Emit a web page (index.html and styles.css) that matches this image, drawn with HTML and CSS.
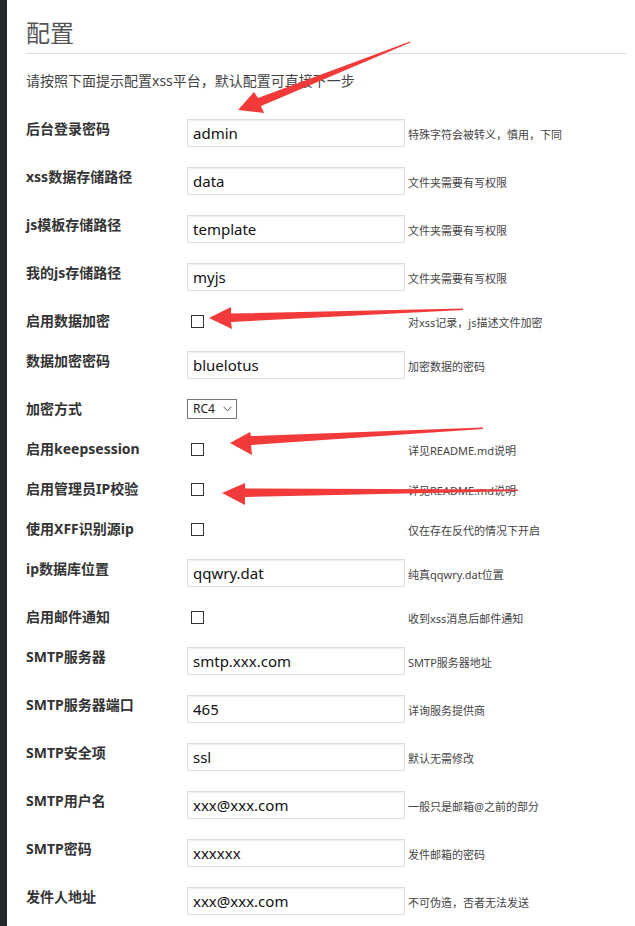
FILE: index.html
```html
<!DOCTYPE html>
<html lang="zh-CN">
<head>
<meta charset="utf-8">
<title>配置</title>
<link rel="stylesheet" href="styles.css">
</head>
<body>
<div class="page">
  <aside class="sidebar"></aside>
  <main class="content">
    <h1 class="title">配置</h1>
    <p class="intro">请按照下面提示配置xss平台，默认配置可直接下一步</p>
    <table class="form-table">
      <colgroup><col class="c-label"><col class="c-field"><col class="c-desc"></colgroup>
      <tr><th>后台登录密码</th><td class="field"><input class="text" type="text" value="admin"></td><td class="desc">特殊字符会被转义，慎用，下同</td></tr>
      <tr><th>xss数据存储路径</th><td class="field"><input class="text" type="text" value="data"></td><td class="desc">文件夹需要有写权限</td></tr>
      <tr><th>js模板存储路径</th><td class="field"><input class="text" type="text" value="template"></td><td class="desc">文件夹需要有写权限</td></tr>
      <tr><th>我的js存储路径</th><td class="field"><input class="text" type="text" value="myjs"></td><td class="desc">文件夹需要有写权限</td></tr>
      <tr><th>启用数据加密</th><td class="field"><input class="check" type="checkbox"></td><td class="desc">对xss记录，js描述文件加密</td></tr>
      <tr><th>数据加密密码</th><td class="field"><input class="text" type="text" value="bluelotus"></td><td class="desc">加密数据的密码</td></tr>
      <tr><th>加密方式</th><td class="field"><span class="select-wrap"><select class="select"><option>RC4</option><option>AES</option></select><svg class="chevron" width="9" height="6" viewBox="0 0 9 6"><path d="M0.5 0.8 L4.5 4.8 L8.5 0.8" fill="none" stroke="#555" stroke-width="1"/></svg></span></td><td class="desc"></td></tr>
      <tr><th>启用keepsession</th><td class="field"><input class="check" type="checkbox"></td><td class="desc">详见README.md说明</td></tr>
      <tr><th>启用管理员IP校验</th><td class="field"><input class="check" type="checkbox"></td><td class="desc">详见README.md说明</td></tr>
      <tr><th>使用XFF识别源ip</th><td class="field"><input class="check" type="checkbox"></td><td class="desc">仅在存在反代的情况下开启</td></tr>
      <tr><th>ip数据库位置</th><td class="field"><input class="text" type="text" value="qqwry.dat"></td><td class="desc">纯真qqwry.dat位置</td></tr>
      <tr><th>启用邮件通知</th><td class="field"><input class="check" type="checkbox"></td><td class="desc">收到xss消息后邮件通知</td></tr>
      <tr><th>SMTP服务器</th><td class="field"><input class="text" type="text" value="smtp.xxx.com"></td><td class="desc">SMTP服务器地址</td></tr>
      <tr><th>SMTP服务器端口</th><td class="field"><input class="text" type="text" value="465"></td><td class="desc">详询服务提供商</td></tr>
      <tr><th>SMTP安全项</th><td class="field"><input class="text" type="text" value="ssl"></td><td class="desc">默认无需修改</td></tr>
      <tr><th>SMTP用户名</th><td class="field"><input class="text" type="text" value="xxx@xxx.com"></td><td class="desc">一般只是邮箱@之前的部分</td></tr>
      <tr><th>SMTP密码</th><td class="field"><input class="text" type="text" value="xxxxxx"></td><td class="desc">发件邮箱的密码</td></tr>
      <tr><th>发件人地址</th><td class="field"><input class="text" type="text" value="xxx@xxx.com"></td><td class="desc">不可伪造，否者无法发送</td></tr>
    </table>
  </main>
</div>
<svg class="annotations" width="635" height="926" viewBox="0 0 635 926" aria-hidden="true">
  <polygon class="arrow" points="238,110 254,92 258,98 410,41.5 410.5,42.5 261,106 264,113"/>
  <polygon class="arrow" points="209,318 231,307 231,313.5 463,308.5 463,310 231,322 232,329"/>
  <polygon class="arrow" points="230,443 250,432 251,436 483,427.5 483,429 251,445 252,455"/>
  <polygon class="arrow" points="222,493 245,483 245,488.5 518,489.5 518,491 245,497 245,505"/>
</svg>
</body>
</html>
```

FILE: styles.css
```css
html, body {
  margin: 0;
  padding: 0;
}

body {
  position: relative;
  overflow: hidden;
  background: #fff;
  color: #333;
  font-family: "Noto Sans", "Noto Sans CJK SC", sans-serif;
}

.page {
  display: flex;
  min-height: 926px;
}

.sidebar {
  flex: none;
  width: 7px;
  background: #23282d;
}

.content {
  flex: 1;
  padding: 0 8px 0 19px;
}

.title {
  margin: 17px 0 0;
  padding-bottom: 6px;
  font-size: 24px;
  line-height: 30px;
  font-weight: 400;
  color: #555;
  border-bottom: 1px solid #ddd;
  font-family: "Noto Sans CJK SC", sans-serif;
}

.intro {
  margin: 17px 0 0;
  font-size: 14px;
  line-height: 20px;
  color: #444;
}

.form-table {
  margin-top: 18px;
  width: 100%;
  table-layout: fixed;
  border-collapse: collapse;
  border-spacing: 0;
}

.c-label { width: 161px; }
.c-field { width: 221px; }

.form-table th {
  padding: 10px 0;
  text-align: left;
  vertical-align: top;
  font-size: 14px;
  line-height: 20px;
  font-weight: 700;
  color: #333;
  white-space: nowrap;
}

.form-table td {
  padding: 0;
}

.form-table .field {
  padding: 10px 0;
  vertical-align: middle;
}

.form-table .desc {
  padding-top: 4px;
  vertical-align: middle;
  font-size: 11px;
  line-height: 16px;
  color: #444;
  white-space: nowrap;
}

.text {
  display: block;
  box-sizing: border-box;
  width: 218px;
  height: 28px;
  margin: 0;
  padding: 0 5px;
  border: 1px solid #ddd;
  border-radius: 0;
  box-shadow: inset 0 1px 2px rgba(0, 0, 0, 0.07);
  background: #fff;
  color: #111;
  font-family: "Noto Sans", sans-serif;
  font-size: 15px;
  outline: none;
}

.check {
  display: block;
  -webkit-appearance: none;
  appearance: none;
  box-sizing: border-box;
  width: 13px;
  height: 13px;
  margin: 3px 3px 3px 4px;
  border: 1px solid #333;
  border-radius: 0;
  background: #fff;
}

.select-wrap {
  position: relative;
  display: block;
  width: 50px;
  height: 20px;
}

.select {
  display: block;
  -webkit-appearance: none;
  appearance: none;
  box-sizing: border-box;
  width: 50px;
  height: 20px;
  margin: 0;
  padding: 0 0 0 5px;
  border: 1px solid #777;
  border-radius: 0;
  background: #fff;
  font-family: "Noto Sans", sans-serif;
  font-size: 12px;
  line-height: 18px;
  color: #222;
}

.chevron {
  position: absolute;
  top: 7px;
  left: 36px;
  pointer-events: none;
}

.annotations {
  position: absolute;
  top: 0;
  left: 0;
  pointer-events: none;
}

.arrow {
  fill: #f23a3a;
}
```
